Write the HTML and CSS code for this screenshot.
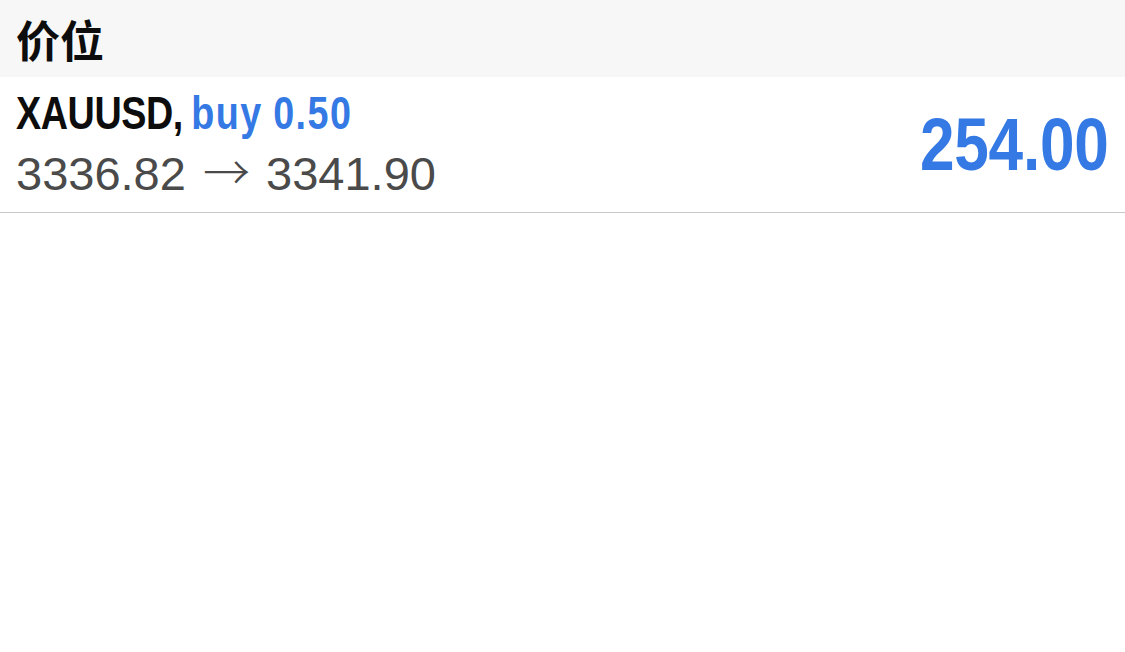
FILE: index.html
```html
<!DOCTYPE html>
<html lang="zh">
<head>
  <meta charset="UTF-8" />
  <title>价位</title>
  <link rel="stylesheet" href="styles.css">
</head>
<body>
  <div class="section-head">价位</div>
  <div class="trade-row">
    <div class="trade-info">
      <div class="trade-title">XAUUSD, <span class="side">buy 0.50</span></div>
      <div class="trade-prices">3336.82 <span class="arrow">→</span> 3341.90</div>
    </div>
    <div class="trade-profit">254.00</div>
  </div>
</body>
</html>
```

FILE: styles.css
```css
:root {
  --blue: #3479e4;
  --text: #0d0d0d;
  --muted: #4a4a4a;
  --head-bg: #f7f7f7;
  --line: #c9c9c9;
}
* { box-sizing: border-box; margin: 0; padding: 0; }
body {
  background: #fff;
  font-family: "Liberation Sans", Arial, "Noto Sans CJK SC", sans-serif;
  color: var(--text);
}
.section-head {
  background: var(--head-bg);
  height: 77px;
  padding: 0 16px;
  display: flex; align-items: center;
  font-family: "Noto Sans CJK SC", sans-serif;
  font-size: 44px; font-weight: 700;
}
.trade-row {
  display: flex; align-items: center; justify-content: space-between;
  height: 136px;
  padding: 0 16px;
  border-bottom: 1px solid var(--line);
}
.trade-title {
  display: inline-block;
  font-size: 46px; font-weight: 700;
  line-height: 54px;
  white-space: nowrap;
  transform: scaleX(0.82);
  transform-origin: left center;
  letter-spacing: -0.5px;
  word-spacing: -2px;
}
.side {
  color: var(--blue);
  letter-spacing: 1.8px;
}
.trade-prices {
  font-size: 47px;
  color: var(--muted);
  line-height: 60px;
  white-space: nowrap;
  word-spacing: 1px;
}
.arrow {
  font-family: "Noto Sans CJK SC", sans-serif;
  font-weight: 300;
  margin: 0 2px 0 3px;
}
.trade-profit {
  font-size: 74px; font-weight: 700;
  color: var(--blue);
  transform: scaleX(0.84);
  transform-origin: right center;
  letter-spacing: -0.3px;
}
```
